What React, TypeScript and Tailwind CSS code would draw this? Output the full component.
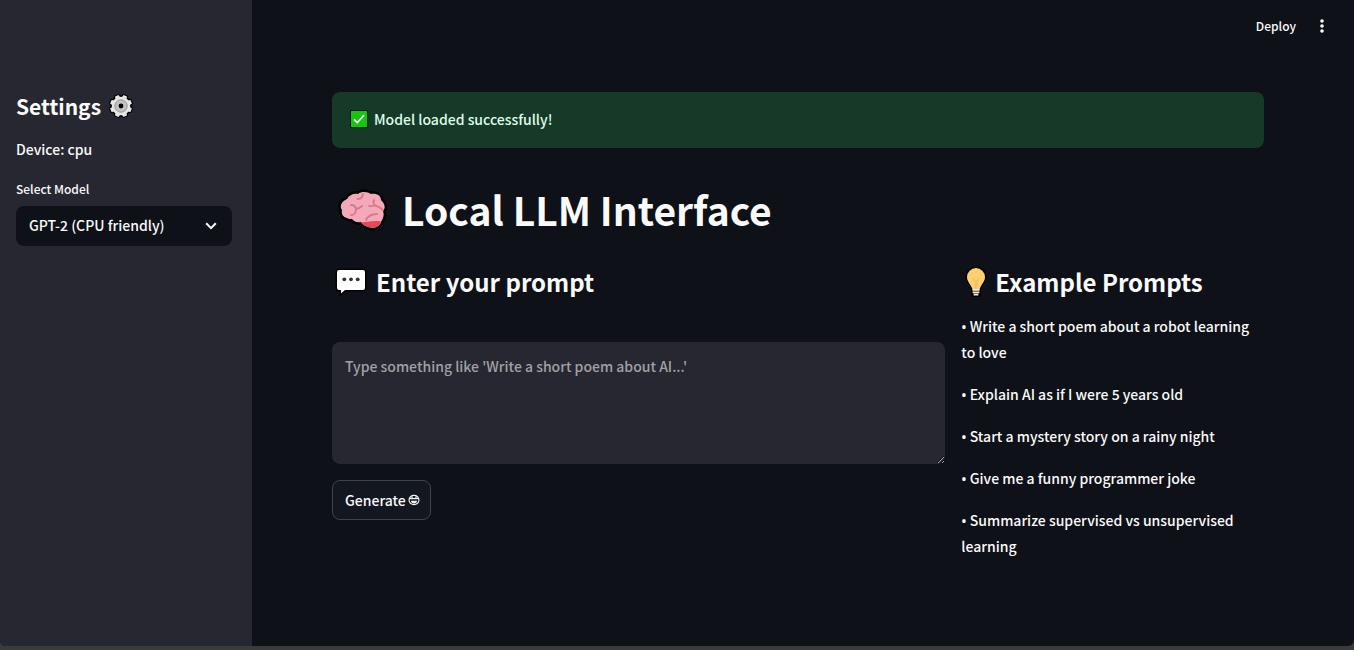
import { useState } from "react";

const examples = [
  "Write a short poem about a robot learning to love",
  "Explain AI as if I were 5 years old",
  "Start a mystery story on a rainy night",
  "Give me a funny programmer joke",
  "Summarize supervised vs unsupervised learning",
];

function Gear() {
  const teeth = [22.5, 67.5, 112.5, 157.5, 202.5, 247.5, 292.5, 337.5];
  return (
    <svg viewBox="0 0 24 24" className="size-6 shrink-0 overflow-visible" aria-hidden="true">
      <g fill="#000" stroke="#000" strokeWidth="2.6" strokeLinejoin="round">
        <circle cx="12" cy="12" r="9.4" />
        {teeth.map((a) => (
          <path key={a} d="M9.5 4 10.3 1.2H13.7L14.5 4Z" transform={`rotate(${a} 12 12)`} />
        ))}
      </g>
      <g fill="#e6e6e6">
        <circle cx="12" cy="12" r="9.2" />
        {teeth.map((a) => (
          <path key={a} d="M9.3 4.2 10.1 1H13.9L14.7 4.2Z" transform={`rotate(${a} 12 12)`} />
        ))}
      </g>
      <circle cx="12" cy="12" r="6.2" fill="#c2c2c2" stroke="#858585" strokeWidth="0.8" />
      <circle cx="12" cy="12" r="2.4" fill="#000" />
    </svg>
  );
}

function Check() {
  return (
    <svg viewBox="0 0 18 18" className="size-[18px] shrink-0" aria-hidden="true">
      <rect width="18" height="18" rx="1" fill="#07180c" />
      <rect x="1" y="1" width="16" height="16" fill="#16c60c" />
      <path d="m4 9.3 3.3 3.2L14 5.2" fill="none" stroke="#fff" strokeWidth="1.7" />
    </svg>
  );
}

function Brain() {
  const shape =
    "M9 29C5 28 3 25 4 21C1 17 4 12 9 10C11 6 16 4 20 5C24 2 30 3 33 5C39 4 43 7 43 11C47 15 48 19 45 22C47 27 44 31 43 33C42 38 35 40 30 38C27 37 24 35 23 33C18 34 16 32 14 30C12 30 10 30 9 29Z";
  return (
    <svg viewBox="0 0 48 42" className="h-[42px] w-12 shrink-0 overflow-visible" aria-hidden="true">
      <path d={shape} fill="#000" stroke="#000" strokeWidth="5" strokeLinejoin="round" />
      <path d={shape} fill="#f4a9ba" />
      <path d="M23 33C29 34 34 31 43 32.4C42 38 35 40 30 38C27 37 24 35 23 33Z" fill="#e74856" />
      <g fill="none" stroke="#d9788b" strokeWidth="1.8" strokeLinecap="round">
        <path d="M13 16C16 16 18 18 18 21C17.5 25 16 26 13 26M18 20C21 20 23 18 24 17" />
        <path d="M25 5C24.5 8.5 22.5 10 19.5 10" />
        <path d="M36 11C35 13 35.5 15 37 16.5C35 17 33 17.5 31 17M37 16.5C40 17 42 18.5 45 21" />
        <path d="M28 31C30 27 33 25 39 25" />
      </g>
    </svg>
  );
}

function Bubble() {
  const shape = "M3 2H27Q29 2 29 4V20Q29 22 27 22H9L5 25.5V22H3Q1 22 1 20V4Q1 2 3 2Z";
  return (
    <svg viewBox="0 0 30 28" className="h-7 w-[30px] shrink-0 overflow-visible" aria-hidden="true">
      <path d={shape} fill="#000" stroke="#000" strokeWidth="3" />
      <path d={shape} fill="#fff" />
      <g fill="#333">
        <circle cx="8.3" cy="11.3" r="1.9" />
        <circle cx="15" cy="11.3" r="1.9" />
        <circle cx="21.7" cy="11.3" r="1.9" />
      </g>
    </svg>
  );
}

function Bulb() {
  const glass = "M11 1A9 9 0 0 0 2 10C2 14 4.5 16 6 19L7.4 22H14.6L16 19C17.5 16 20 14 20 10A9 9 0 0 0 11 1Z";
  return (
    <svg viewBox="0 0 22 30" className="h-[30px] w-[22px] shrink-0 overflow-visible" aria-hidden="true">
      <path d={glass} fill="#000" stroke="#000" strokeWidth="3" />
      <rect x="6" y="20" width="10" height="10" rx="3" fill="#000" />
      <path d={glass} fill="#ffd06b" />
      <path d="M8 11 10.2 14V22M14 11 11.8 14V22" fill="none" stroke="#f2b95a" strokeWidth="1" />
      <path d="M7.4 22.8H14.6M7.6 25.3H14.4M8.6 27.7H13.4" stroke="#eee" strokeWidth="1.7" />
    </svg>
  );
}

function Face() {
  return (
    <svg viewBox="0 0 12 12" className="size-3 shrink-0" aria-hidden="true">
      <ellipse cx="6" cy="6" rx="5" ry="4.6" fill="none" stroke="#f4f4f4" strokeWidth="1.1" />
      <path d="M1 4.6H11" stroke="#f4f4f4" strokeWidth="1.2" />
      <path d="M3 6.8H9C9 8.6 7.6 9.4 6 9.4S3 8.6 3 6.8Z" fill="#f4f4f4" />
      <path d="M3.2 3.2H5M7 3.2H8.8" stroke="#f4f4f4" strokeWidth="1" />
    </svg>
  );
}

export default function App() {
  const [prompt, setPrompt] = useState("");
  return (
    <div className="min-h-screen bg-[#3b393a] pb-1 font-['Noto_Sans_CJK_SC',sans-serif] text-sm font-medium text-[#fafafa]">
      <div className="flex min-h-[calc(100vh-4px)] overflow-hidden rounded-b-md bg-[#0e1117]">
        <aside className="flex w-[252px] shrink-0 flex-col bg-[#262730] pt-[90px] pr-5 pl-4">
          <h2 className="flex h-8 items-center gap-2 text-[21px] font-bold">
            Settings
            <Gear />
          </h2>
          <p className="mt-[15px] leading-6">Device: cpu</p>
          <label htmlFor="model" className="mt-4 text-xs leading-6">
            Select Model
          </label>
          <div className="relative mt-[5px]">
            <select
              id="model"
              className="h-10 w-full appearance-none rounded-lg bg-[#0e1117] px-[13px] pr-10 pb-0.5 outline-none"
            >
              <option>GPT-2 (CPU friendly)</option>
            </select>
            <svg
              viewBox="0 0 12 8"
              className="pointer-events-none absolute top-4 right-[15px] h-2 w-3"
              fill="none"
              stroke="#fafafa"
              strokeWidth="2"
              aria-hidden="true"
            >
              <path d="m1.2 1.2 4.8 4.9 4.8-4.9" />
            </svg>
          </div>
        </aside>

        <div className="flex min-w-0 flex-1 flex-col">
          <header className="flex h-[52px] items-center justify-end gap-[18px] pr-6">
            <button type="button" className="text-xs">
              Deploy
            </button>
            <button type="button" aria-label="Menu" className="flex w-4 justify-center">
              <svg viewBox="0 0 4 14" className="h-3.5 w-1" fill="#fafafa" aria-hidden="true">
                <circle cx="2" cy="2" r="1.8" />
                <circle cx="2" cy="7" r="1.8" />
                <circle cx="2" cy="12" r="1.8" />
              </svg>
            </button>
          </header>

          <main className="pt-10 pr-[90px] pb-10 pl-20">
            <div role="status" className="flex h-14 items-center gap-1.5 rounded-lg bg-[#173928] px-[18px] pb-0.5 text-[#dffde9]">
              <Check />
              Model loaded successfully!
            </div>

            <h1 className="mt-[30px] flex h-16 items-center gap-4 pl-1.5 text-[39px] font-bold">
              <Brain />
              Local LLM Interface
            </h1>

            <div className="mt-[22px] flex gap-4">
              <section className="min-w-0 flex-[1_1_calc(66.66%-16px)]">
                <h2 className="flex h-9 items-center gap-2.5 pl-1 text-2xl font-bold">
                  <Bubble />
                  Enter your prompt
                </h2>
                <textarea
                  aria-label="Prompt"
                  value={prompt}
                  onChange={(e) => setPrompt(e.target.value)}
                  placeholder="Type something like 'Write a short poem about AI...'"
                  className="mt-[42px] block h-[122px] w-full resize-y rounded-lg bg-[#262730] px-[13px] py-3 leading-6 outline-none placeholder:text-[#a0a1a6]"
                />
                <button
                  type="button"
                  className="mt-4 flex h-10 items-center gap-0.5 rounded-lg border border-[#41434a] bg-[#131720] pr-2.5 pl-3"
                >
                  Generate
                  <Face />
                </button>
              </section>

              <section className="min-w-0 flex-[1_1_calc(33.33%-16px)]">
                <h2 className="flex h-9 items-center gap-2 pl-1 text-2xl font-bold">
                  <Bulb />
                  Example Prompts
                </h2>
                <div className="mt-[13px] flex flex-col gap-4 leading-[26px]">
                  {examples.map((text) => (
                    <p key={text}>
                      <span className="font-['Noto_Sans',sans-serif] leading-none">•</span> {text}
                    </p>
                  ))}
                </div>
              </section>
            </div>
          </main>
        </div>
      </div>
    </div>
  );
}
